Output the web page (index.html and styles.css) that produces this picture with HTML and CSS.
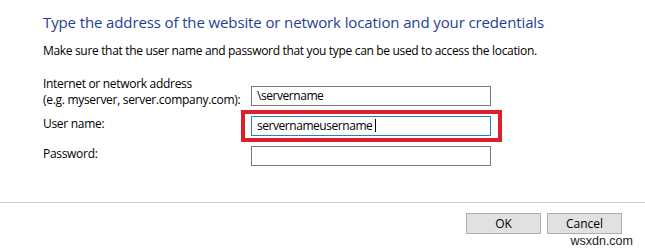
FILE: index.html
```html
<!DOCTYPE html>
<html lang="en">
<head>
    <meta charset="UTF-8">
    <title>Add Network Location</title>
    <link rel="stylesheet" href="styles.css">
</head>
<body>

    <div class="dialog">
        <div class="content">
            <h1 class="instruction">Type the address of the website or network location and your credentials</h1>
            <p class="hint">Make sure that the user name and password that you type can be used to access the location.</p>

            <div class="form">
                <label class="label">Internet or network address<br>(e.g. myserver, server.company.com):</label>
                <div class="field field-first">\servername</div>

                <label class="label">User name:</label>
                <div class="highlight">
                    <div class="field field-focus">servernameusername<span class="caret"></span></div>
                </div>

                <label class="label">Password:</label>
                <div class="field"></div>
            </div>
        </div>

        <div class="footer">
            <button class="btn">OK</button>
            <button class="btn">Cancel</button>
        </div>

        <span class="watermark">wsxdn.com</span>
    </div>

</body>
</html>
```

FILE: styles.css
```css
body {
    margin: 0;
    background-color: #fff;
    font-family: "Open Sans", "Noto Sans", sans-serif;
    color: #000;
}
.dialog {
    position: relative;
    width: 645px;
    height: 252px;
    overflow: hidden;
}
.content {
    padding-left: 43px;
    height: 203px;
    border-bottom: 1px solid #cfcfcf;
    box-sizing: border-box;
}
.instruction {
    margin: 0;
    padding-top: 11px;
    font-size: 15px;
    font-weight: normal;
    line-height: 22px;
    color: #1f3f96;
    letter-spacing: -0.12px;
}
.hint {
    margin: 10px 0 0 0;
    font-size: 12px;
    line-height: 16px;
    letter-spacing: -0.33px;
}
.form {
    display: grid;
    grid-template-columns: 208px 240px;
    grid-template-rows: 40px 30px 30px;
    align-items: start;
    margin-top: 17px;
}
.label {
    font-size: 12px;
    line-height: 16px;
    letter-spacing: -0.3px;
    white-space: nowrap;
}
.field {
    height: 20px;
    box-sizing: border-box;
    border: 1px solid #7a7a7a;
    padding-left: 5px;
    font-size: 12px;
    line-height: 18px;
    letter-spacing: -0.45px;
    white-space: nowrap;
}
.field-first {
    margin-top: 10px;
}
.field-focus {
    border-color: #2b7fc8;
}
.caret {
    display: inline-block;
    width: 1px;
    height: 13px;
    margin-left: 3px;
    vertical-align: -2px;
    background-color: #000;
}
/* red annotation frame around the user name box */
.highlight {
    position: relative;
}
.highlight::after {
    content: "";
    position: absolute;
    top: -6px;
    bottom: -6px;
    left: -10px;
    right: -11px;
    border: 4px solid #d9202c;
}
.footer {
    display: flex;
    justify-content: flex-end;
    gap: 6px;
    padding: 10px 23px 0 0;
}
.btn {
    width: 75px;
    height: 21px;
    padding: 0;
    background-color: #e1e1e1;
    border: 1px solid #adadad;
    font-family: "Open Sans", "Noto Sans", sans-serif;
    font-size: 12px;
    color: #000;
}
.watermark {
    position: absolute;
    right: 12px;
    bottom: 4px;
    font-family: "Liberation Sans", Arial, sans-serif;
    font-size: 12.5px;
    color: #1a1a1a;
}
```
